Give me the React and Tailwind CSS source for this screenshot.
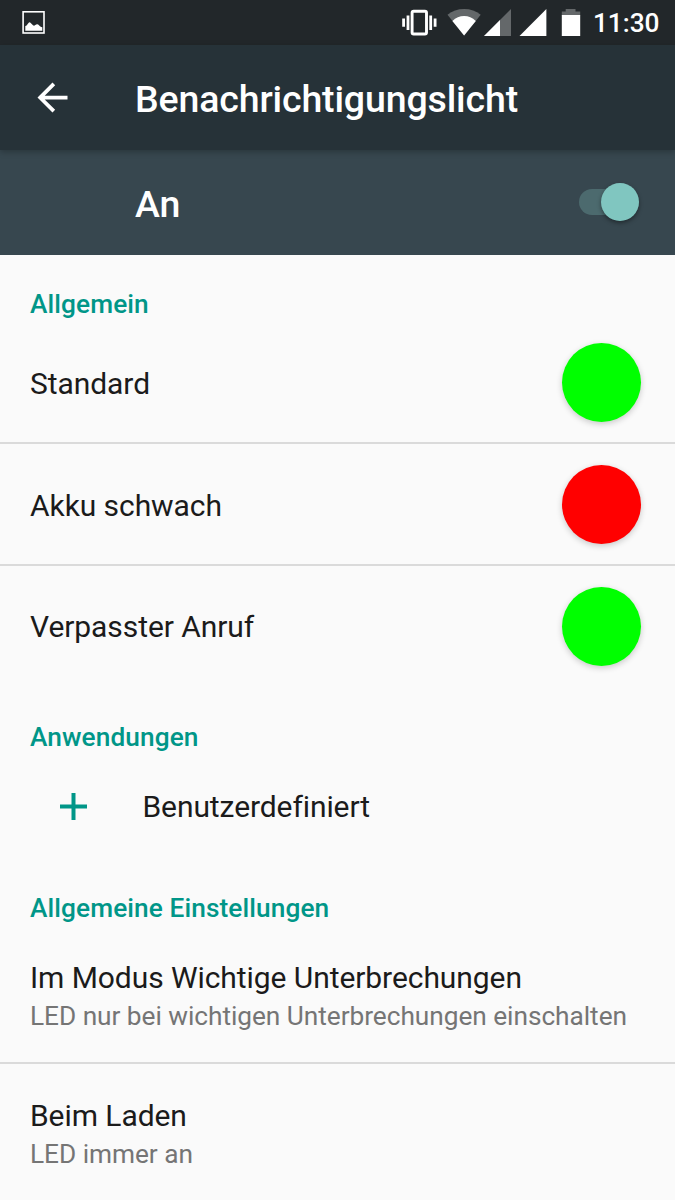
const lights = [
  { label: "Standard", color: "bg-[#00ff00]" },
  { label: "Akku schwach", color: "bg-[#ff0000]" },
  { label: "Verpasster Anruf", color: "bg-[#00ff00]" },
];

const settings = [
  {
    title: "Im Modus Wichtige Unterbrechungen",
    summary: "LED nur bei wichtigen Unterbrechungen einschalten",
  },
  { title: "Beim Laden", summary: "LED immer an" },
];

function StatusBar() {
  return (
    <div className="flex h-[45px] items-center justify-between bg-[#22272a] pl-[22px] pr-[15.5px]">
      <svg width="23" height="45" viewBox="22 0 23 45" fill="#fff">
        <rect x="23.1" y="11.8" width="20.9" height="21.2" fill="none" stroke="#fff" strokeWidth="1.6" />
        <path d="M25.3 30.7v-4.6c1.5-.3 2-1.8 3.2-3.2.6-1 1.6-1 2.2 0l2.3 2.3c.8.8 1.5.5 2.3-.2 1.2-1.2 2.8-1 3.7.2 1 1.4 1.6 1.6 3.3 2v3.5z" />
      </svg>

      <div className="flex items-center">
        {/* vibrate, wifi, two SIM signals, battery */}
        <svg width="180" height="45" viewBox="402 0 180 45" fill="#fff">
          <rect x="412.1" y="11.2" width="14.4" height="22.8" rx="1.6" fill="none" stroke="#fff" strokeWidth="2.9" />
          <path d="M402.2 18.6h2.8v8.2h-2.8zM406.6 15.4h2.8v14.6h-2.8zM429.3 15.4h2.8v14.6h-2.8zM433.7 18.6h2.8v8.2h-2.8z" />
          <path d="M464.1 35.5L447.5 14.8Q454.5 9 464.1 9T480.7 14.8z" fill="#64686a" />
          <path d="M464.1 35.5L452.4 20.9Q457.5 16 464.1 16T475.8 20.9z" />
          <path d="M484 36L511 9v27z" fill="#64686a" />
          <path d="M484 36L500 20v16z" />
          <path d="M519.5 36L546.4 9v27z" />
          <path d="M565.7 9h9.8v2.5h4.7v4h-18.4v-4h3.9z" fill="#64686a" />
          <path d="M561.8 15h18.4v21h-18.4z" />
        </svg>
        <span className="ml-[10.5px] pt-0.5 text-[26.25px] font-medium leading-[45px] text-white">11:30</span>
      </div>
    </div>
  );
}

function SectionTitle({ children }) {
  return (
    <h2 className="h-[67px] px-[30px] pt-[33px] text-[26.25px] font-medium leading-8 tracking-[0.09px] text-[#009688]">
      {children}
    </h2>
  );
}

export default function App() {
  return (
    <div className="h-[1200px] w-[675px] overflow-hidden whitespace-nowrap bg-[#fafafa] font-['Roboto',sans-serif] text-[#1b1b1b]">
      <StatusBar />

      <header className="relative flex h-[105px] items-center bg-[#263238] pl-[30px] text-white shadow-[0_2px_6px_rgba(0,0,0,0.25)]">
        <svg width="45" height="45" viewBox="0 0 24 24" fill="currentColor">
          <path d="M20 11H7.83l5.59-5.59L12 4l-8 8 8 8 1.41-1.41L7.83 13H20v-2z" />
        </svg>
        <h1 className="ml-[60px] pt-1 text-[37.5px] font-medium leading-none tracking-[-0.14px]">
          Benachrichtigungslicht
        </h1>
      </header>

      {/* Main switch */}
      <div className="flex h-[105px] items-center justify-between bg-[#37474f] pl-[135px] pr-[36.5px] text-white">
        <span className="pt-1 text-[37.5px] font-medium leading-none">An</span>
        <button className="mb-px flex h-[26px] w-[59.5px] items-center justify-end rounded-full bg-[#4c6a6e]">
          <span className="size-[38px] shrink-0 rounded-full bg-[#80c6c0] shadow-[0_2px_4px_rgba(0,0,0,0.4)]" />
        </button>
      </div>

      <SectionTitle>Allgemein</SectionTitle>
      <div>
        {lights.map((light) => (
          <div
            key={light.label}
            className="flex h-[121.875px] items-center justify-between border-b-2 border-[#dadada] pl-[30px] pr-[34px] pt-[1.5px] last:border-transparent"
          >
            <span className="pt-px text-[30px] tracking-[-0.07px]">{light.label}</span>
            <span className={`size-[79px] rounded-full shadow-[0_2px_6px_rgba(0,0,0,0.2)] ${light.color}`} />
          </div>
        ))}
      </div>

      <SectionTitle>Anwendungen</SectionTitle>
      <div className="flex h-[104px] items-center pb-px pl-[59.5px]">
        <svg width="27" height="27" viewBox="0 0 27 27" fill="#009688">
          <path d="M11.5 0h4v11.5H27v4H15.5V27h-4V15.5H0v-4h11.5z" />
        </svg>
        <span className="ml-[56px] text-[30px] tracking-[-0.09px]">Benutzerdefiniert</span>
      </div>

      <SectionTitle>Allgemeine Einstellungen</SectionTitle>
      <div className="divide-y-2 divide-[#dadada]">
        {settings.map((item) => (
          <div key={item.title} className="h-[138px] px-[30px] pt-[33px]">
            <p className="text-[30px] leading-[38px] tracking-[-0.07px]">{item.title}</p>
            <p className="text-[26.25px] leading-[38px] tracking-[-0.04px] text-[#757575]">{item.summary}</p>
          </div>
        ))}
      </div>
    </div>
  );
}
